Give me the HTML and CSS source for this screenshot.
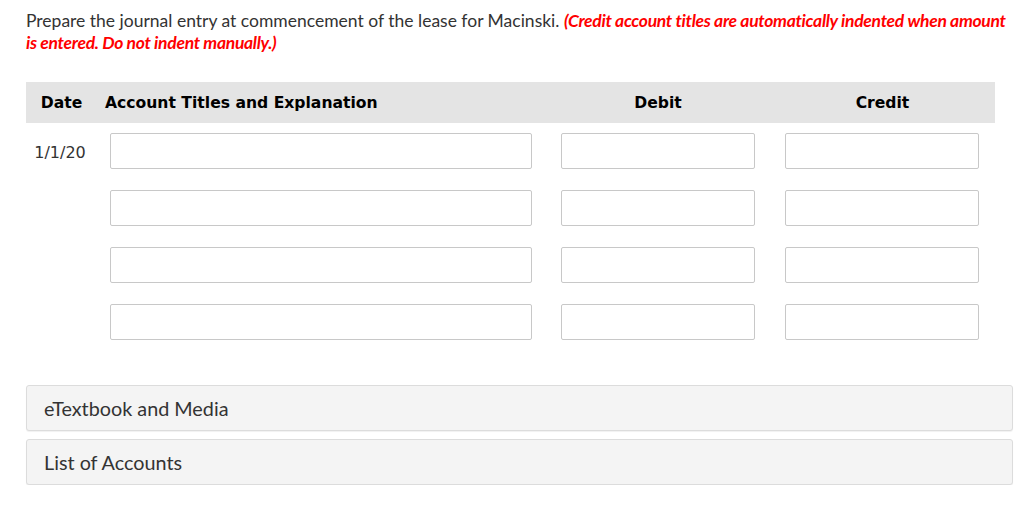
FILE: index.html
```html
<!DOCTYPE html>
<html>
<head>
<meta charset="utf-8">
<link rel="stylesheet" href="styles.css">
</head>
<body>
<div class="page">
  <p class="intro">Prepare the journal entry at commencement of the lease for Macinski. <em class="warn">(Credit account titles are automatically indented when amount is entered. Do not indent manually.)</em></p>

  <div class="journal">
    <div class="hdr hdr-date">Date</div>
    <div class="hdr hdr-acct">Account Titles and Explanation</div>
    <div class="hdr hdr-num">Debit</div>
    <div class="hdr hdr-num">Credit</div>

    <div class="cell date">1/1/20</div>
    <div class="cell"><input class="field acct" type="text"></div>
    <div class="cell"><input class="field num" type="text"></div>
    <div class="cell"><input class="field num" type="text"></div>

    <div class="cell date"></div>
    <div class="cell"><input class="field acct" type="text"></div>
    <div class="cell"><input class="field num" type="text"></div>
    <div class="cell"><input class="field num" type="text"></div>

    <div class="cell date"></div>
    <div class="cell"><input class="field acct" type="text"></div>
    <div class="cell"><input class="field num" type="text"></div>
    <div class="cell"><input class="field num" type="text"></div>

    <div class="cell date"></div>
    <div class="cell"><input class="field acct" type="text"></div>
    <div class="cell"><input class="field num" type="text"></div>
    <div class="cell"><input class="field num" type="text"></div>
  </div>

  <div class="panels">
    <div class="panel">eTextbook and Media</div>
    <div class="panel">List of Accounts</div>
  </div>
</div>
</body>
</html>
```

FILE: styles.css
```css
html, body {
  margin: 0;
  padding: 0;
  background: #fff;
}

.page {
  padding: 10px 11px 0 26px;
  font-family: Lato, "Liberation Sans", sans-serif;
  color: #333;
}

.intro {
  margin: 0 -4px 0 0;
  font-size: 17.5px;
  line-height: 22px;
  color: #333;
}

.warn {
  color: #f00;
  font-weight: bold;
  font-style: italic;
  letter-spacing: -0.3px;
}

.journal {
  margin-top: 28px;
  width: 969px;
  display: grid;
  grid-template-columns: 70px 450px 224px 225px;
  grid-auto-rows: 57px;
  grid-template-rows: 41px;
  font-family: "DejaVu Sans", Verdana, sans-serif;
  color: #000;
}

.hdr {
  background: #e4e4e4;
  font-weight: bold;
  font-size: 15.6px;
  display: flex;
  align-items: center;
}

.hdr-date {
  justify-content: center;
  padding-left: 1px;
}

.hdr-acct {
  padding-left: 9px;
}

.hdr-num {
  justify-content: center;
}

.cell {
  padding-top: 10px;
  display: flex;
  align-items: flex-start;
}

.date {
  justify-content: center;
  font-size: 16px;
  color: #333;
  padding-top: 20px;
  padding-right: 2px;
}

.field {
  box-sizing: border-box;
  height: 36px;
  border: 1px solid #c8c8c8;
  border-radius: 2px;
  background: #fff;
  margin: 0;
  padding: 0 6px;
  outline: none;
}

.acct {
  margin-left: 14px;
  width: 422px;
}

.num {
  margin-left: 15px;
  width: 194px;
}

.panels {
  margin-top: 34px;
  display: flex;
  flex-direction: column;
  gap: 8px;
}

.panel {
  box-sizing: border-box;
  height: 46px;
  background: #f4f4f4;
  border: 1px solid #dcdcdc;
  border-radius: 3px;
  box-shadow: 0 1px 1px rgba(0,0,0,0.06);
  padding-left: 17px;
  display: flex;
  align-items: center;
  font-size: 19.8px;
  color: #333;
}
```
